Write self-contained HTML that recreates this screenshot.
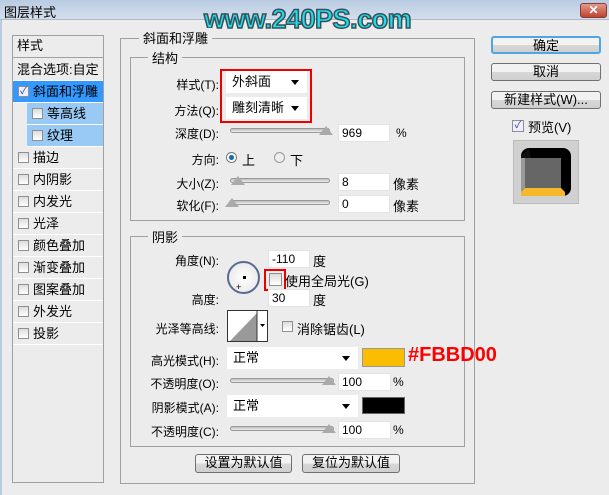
<!DOCTYPE html><html><head><meta charset="utf-8"><style>
*{margin:0;padding:0;box-sizing:border-box}
body{width:609px;height:495px;overflow:hidden;background:#ececec;font-family:"Liberation Sans","Noto Sans CJK SC",sans-serif;font-size:12px;color:#000;position:relative}
.a{position:absolute;white-space:nowrap}
.title{left:0;top:0;width:609px;height:20px;background:linear-gradient(#b9cbe2,#d3deec);border-bottom:1px solid #aab8c8}
.box{position:absolute;border:1px solid #a0a0a0}
.leg{position:absolute;background:#ececec;padding:0 4px;font-size:13px}
.row{position:absolute;left:13px;width:90px;height:22px;border-bottom:1px solid #fff;font-size:13px;line-height:21px;padding-left:20px}
.cb{position:absolute;width:11px;height:11px;border:1px solid #8f8f8f;background:linear-gradient(#ddd,#fff)}
.row .cb{left:5px;top:5px}
.inp{position:absolute;background:#fff;border:1px solid #e3e3e3;height:18px;font-size:12px;line-height:17px;padding-left:3px}
.sl{position:absolute;height:5px;border:1px solid #999;border-radius:3px;background:linear-gradient(#bbb,#eee)}
.th{position:absolute;width:0;height:0;border-left:7px solid transparent;border-right:7px solid transparent;border-bottom:9px solid #aaa}
.dd{position:absolute;background:#fff;height:22px;font-size:13px;line-height:22px;padding-left:6px}
.dd:after{content:"";position:absolute;right:8px;top:9px;border-left:4px solid transparent;border-right:4px solid transparent;border-top:5px solid #000}
.btn{position:absolute;border:1px solid #707070;border-radius:3px;background:linear-gradient(#f2f2f2 50%,#d8d8d8 50%,#cfcfcf);text-align:center;font-size:13px;line-height:16px}
.lbl{position:absolute;font-size:12px;text-align:right;width:110px}
</style></head><body>
<div class="a title"></div>
<div class="a" style="left:4px;top:2px;font-size:13px">图层样式</div>
<div class="a" style="left:580px;top:3px;width:27px;height:15px;background:linear-gradient(#e39a8c,#c0432e);border:1px solid #8a3a2e;border-radius:3px;color:#fff;font-weight:bold;text-align:center;line-height:13px;font-size:12px">✕</div>
<div class="a" style="left:0;top:20px;width:2px;height:475px;background:#b9cbe2"></div>
<div class="a" style="left:204px;top:4px;font-size:27px;font-weight:bold;color:#19e0ec;-webkit-text-stroke:1.5px #3b4f58;letter-spacing:-0.5px">www.240PS.com</div>

<div class="box" style="left:12px;top:35px;width:92px;height:448px"></div>
<div class="a" style="left:13px;top:36px;width:90px;height:22px;border-bottom:1px solid #a0a0a0;font-size:13px;line-height:20px;padding-left:4px">样式</div>
<div class="row" style="top:59px;padding-left:4px">混合选项:自定</div>
<div class="row" style="top:81px;background:#3399ff"><span class="cb" style="background:#eef;color:#2a3a9a;font-size:10px;line-height:9px;text-align:center">✓</span>斜面和浮雕</div>
<div class="row" style="top:103px;left:27px;width:76px;background:#99c9f5"><span class="cb"></span>等高线</div>
<div class="row" style="top:125px;left:27px;width:76px;background:#99c9f5"><span class="cb"></span>纹理</div>
<div class="row" style="top:147px"><span class="cb"></span>描边</div>
<div class="row" style="top:169px"><span class="cb"></span>内阴影</div>
<div class="row" style="top:191px"><span class="cb"></span>内发光</div>
<div class="row" style="top:213px"><span class="cb"></span>光泽</div>
<div class="row" style="top:235px"><span class="cb"></span>颜色叠加</div>
<div class="row" style="top:257px"><span class="cb"></span>渐变叠加</div>
<div class="row" style="top:279px"><span class="cb"></span>图案叠加</div>
<div class="row" style="top:301px"><span class="cb"></span>外发光</div>
<div class="row" style="top:323px"><span class="cb"></span>投影</div>

<div class="box" style="left:120px;top:38px;width:355px;height:446px"></div>
<div class="leg" style="left:139px;top:28px">斜面和浮雕</div>
<div class="box" style="left:130px;top:57px;width:335px;height:164px"></div>
<div class="leg" style="left:148px;top:48px">结构</div>

<div class="lbl" style="left:109px;top:76px">样式(T):</div>
<div class="dd" style="left:226px;top:71px;width:81px">外斜面</div>
<div class="lbl" style="left:109px;top:102px">方法(Q):</div>
<div class="dd" style="left:226px;top:97px;width:81px">雕刻清晰</div>
<div class="a" style="left:220px;top:69px;width:92px;height:54px;border:2px solid #e00"></div>
<div class="lbl" style="left:109px;top:125px">深度(D):</div>
<div class="sl" style="left:230px;top:128px;width:100px"></div><div class="th" style="left:319px;top:126px"></div>
<div class="inp" style="left:338px;top:124px;width:52px">969</div><div class="a" style="left:396px;top:126px">%</div>
<div class="lbl" style="left:109px;top:151px">方向:</div>
<div class="a" style="left:226px;top:152px;width:11px;height:11px;border-radius:50%;border:1px solid #777;background:radial-gradient(#1a6bb5 35%,#fff 45%)"></div><div class="a" style="left:242px;top:150px;font-size:13px">上</div>
<div class="a" style="left:274px;top:152px;width:11px;height:11px;border-radius:50%;border:1px solid #999;background:#eee"></div><div class="a" style="left:290px;top:150px;font-size:13px">下</div>
<div class="lbl" style="left:109px;top:175px">大小(Z):</div>
<div class="sl" style="left:230px;top:178px;width:100px"></div><div class="th" style="left:231px;top:176px"></div>
<div class="inp" style="left:338px;top:173px;width:52px">8</div><div class="a" style="left:393px;top:174px;font-size:13px">像素</div>
<div class="lbl" style="left:109px;top:197px">软化(F):</div>
<div class="sl" style="left:230px;top:200px;width:100px"></div><div class="th" style="left:225px;top:198px"></div>
<div class="inp" style="left:338px;top:195px;width:52px">0</div><div class="a" style="left:393px;top:196px;font-size:13px">像素</div>

<div class="box" style="left:130px;top:236px;width:335px;height:211px"></div>
<div class="leg" style="left:148px;top:227px">阴影</div>
<div class="lbl" style="left:109px;top:252px">角度(N):</div>
<div class="inp" style="left:268px;top:250px;width:42px">-110</div><div class="a" style="left:313px;top:251px;font-size:13px">度</div>
<div class="a" style="left:227px;top:261px;width:33px;height:33px;border-radius:50%;border:2px solid #5a6b93;background:radial-gradient(#fff,#e4e4e4)"></div>
<div class="a" style="left:243px;top:276px;width:3px;height:3px;background:#000"></div>
<div class="a" style="left:236px;top:282px;font-size:9px">+</div>
<div class="cb" style="left:269px;top:273px;width:13px;height:13px"></div>
<div class="a" style="left:264px;top:269px;width:22px;height:22px;border:2px solid #e00"></div>
<div class="a" style="left:285px;top:271px;font-size:13px">使用全局光(G)</div>
<div class="lbl" style="left:109px;top:291px">高度:</div>
<div class="inp" style="left:268px;top:289px;width:42px">30</div><div class="a" style="left:313px;top:290px;font-size:13px">度</div>
<div class="lbl" style="left:109px;top:320px">光泽等高线:</div>
<div class="a" style="left:227px;top:310px;width:41px;height:32px;border:1px solid #333;background:#fff"><svg width="39" height="30" style="position:absolute;left:0;top:0"><polygon points="2,30 29,2 29,30" fill="#999"/><line x1="29" y1="0" x2="29" y2="30" stroke="#333"/><polygon points="32,13 37,13 34.5,16" fill="#000"/></svg></div>
<div class="cb" style="left:282px;top:321px"></div><div class="a" style="left:297px;top:319px;font-size:13px">消除锯齿(L)</div>
<div class="lbl" style="left:109px;top:352px">高光模式(H):</div>
<div class="dd" style="left:227px;top:347px;width:131px">正常</div>
<div class="a" style="left:362px;top:348px;width:43px;height:19px;background:#fbbd00;border:1px solid #999"></div>
<div class="a" style="left:408px;top:344px;font-size:20px;font-weight:bold;color:#f00">#FBBD00</div>
<div class="lbl" style="left:109px;top:375px">不透明度(O):</div>
<div class="sl" style="left:230px;top:378px;width:104px"></div><div class="th" style="left:322px;top:376px"></div>
<div class="inp" style="left:338px;top:373px;width:53px">100</div><div class="a" style="left:393px;top:375px">%</div>
<div class="lbl" style="left:109px;top:399px">阴影模式(A):</div>
<div class="dd" style="left:227px;top:395px;width:131px">正常</div>
<div class="a" style="left:362px;top:397px;width:43px;height:17px;background:#000;border:1px solid #666"></div>
<div class="lbl" style="left:109px;top:423px">不透明度(C):</div>
<div class="sl" style="left:230px;top:426px;width:104px"></div><div class="th" style="left:322px;top:424px"></div>
<div class="inp" style="left:338px;top:421px;width:53px">100</div><div class="a" style="left:393px;top:423px">%</div>

<div class="btn" style="left:195px;top:454px;width:97px;height:19px">设置为默认值</div>
<div class="btn" style="left:302px;top:454px;width:98px;height:19px">复位为默认值</div>

<div class="btn" style="left:491px;top:36px;width:110px;height:18px;border:2px solid #4fa6e0">确定</div>
<div class="btn" style="left:491px;top:63px;width:110px;height:18px">取消</div>
<div class="btn" style="left:491px;top:91px;width:110px;height:18px">新建样式(W)...</div>
<div class="cb" style="left:512px;top:120px;width:12px;height:12px;background:#eef;color:#2a3a9a;font-size:10px;line-height:10px;text-align:center">✓</div>
<div class="a" style="left:528px;top:117px;font-size:13px">预览(V)</div>
<div class="a" style="left:513px;top:140px;width:66px;height:64px;background:#d0d0d0;border:1px solid #bbb"></div>
<svg class="a" style="left:521px;top:148px" width="50" height="48"><rect x="0" y="0" width="50" height="48" rx="8" fill="#000"/><polygon points="0,8 8,0 10,10 0,10" fill="#111"/><rect x="4" y="10" width="36" height="30" fill="#666"/><polygon points="0,10 4,10 4,40 0,44" fill="#999"/><polygon points="0,44 4,40 40,40 44,44 44,48 0,48" fill="#f5b82a"/></svg>
</body></html>
